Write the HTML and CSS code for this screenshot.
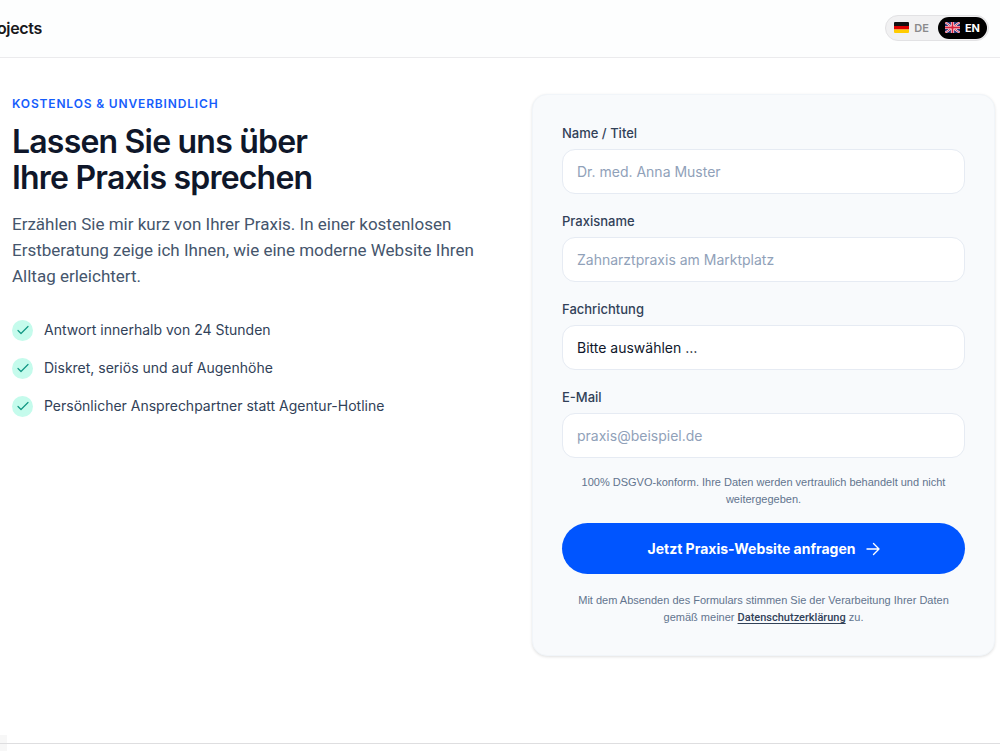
FILE: index.html
```html
<!DOCTYPE html>
<html lang="de">
<head>
<meta charset="utf-8">
<meta name="viewport" content="width=device-width, initial-scale=1">
<title>Praxis-Website anfragen</title>
<link rel="stylesheet" href="styles.css">
</head>
<body>
<header class="header">
  <a class="brand" href="#"><span>Projects</span></a>
  <div class="lang" role="group" aria-label="Sprache">
    <button class="lang-btn" type="button">
      <svg class="flag" viewBox="0 0 15 11" aria-hidden="true"><path fill="#111" d="M0 1a1 1 0 0 1 1-1h13a1 1 0 0 1 1 1v3H0z"/><path fill="#d00" d="M0 4h15v3.500H0z"/><path fill="#fc0" d="M0 7.500h15V10a1 1 0 0 1-1 1H1a1 1 0 0 1-1-1z"/></svg>
      DE
    </button>
    <button class="lang-btn lang-active" type="button" aria-pressed="true">
      <svg class="flag" viewBox="0 0 15 11" aria-hidden="true"><path fill="#29337a" d="M0 0h15v11H0z"/><path stroke="#fff" stroke-width="2" d="M0 0l15 11M15 0L0 11"/><path stroke="#d8203c" stroke-width=".9" d="M0 0l15 11M15 0L0 11"/><path stroke="#fff" stroke-width="3.200" d="M7.500 0v11M0 5.500h15"/><path stroke="#d8203c" stroke-width="1.800" d="M7.500 0v11M0 5.500h15"/></svg>
      EN
    </button>
  </div>
</header>
<main class="contact">
  <section class="intro">
    <p class="eyebrow">Kostenlos &amp; unverbindlich</p>
    <h1 class="title">Lassen Sie uns über<br>Ihre Praxis sprechen</h1>
    <p class="lead">Erzählen Sie mir kurz von Ihrer Praxis. In einer kostenlosen Erstberatung zeige ich Ihnen, wie eine moderne Website Ihren Alltag erleichtert.</p>
    <ul class="benefits">
      <li><span class="tick"><svg viewBox="0 0 12 12" aria-hidden="true"><path d="M1 6.500l3 3 7-7"/></svg></span>Antwort innerhalb von 24 Stunden</li>
      <li><span class="tick"><svg viewBox="0 0 12 12" aria-hidden="true"><path d="M1 6.500l3 3 7-7"/></svg></span>Diskret, seriös und auf Augenhöhe</li>
      <li><span class="tick"><svg viewBox="0 0 12 12" aria-hidden="true"><path d="M1 6.500l3 3 7-7"/></svg></span>Persönlicher Ansprechpartner statt Agentur-Hotline</li>
    </ul>
  </section>
  <form class="card">
    <div class="fields">
      <div class="field"><label for="name">Name / Titel</label><input id="name" type="text" placeholder="Dr. med. Anna Muster"></div>
      <div class="field"><label for="praxis">Praxisname</label><input id="praxis" type="text" placeholder="Zahnarztpraxis am Marktplatz"></div>
      <div class="field"><label for="fach">Fachrichtung</label><select id="fach"><option>Bitte auswählen …</option></select></div>
      <div class="field"><label for="email">E-Mail</label><input id="email" type="email" placeholder="praxis@beispiel.de"></div>
    </div>
    <p class="note privacy">100% DSGVO-konform. Ihre Daten werden vertraulich behandelt und nicht weitergegeben.</p>
    <button class="submit" type="submit">Jetzt Praxis-Website anfragen
      <svg viewBox="0 0 14 14" aria-hidden="true"><path d="M1 7h12M7.500 1.500L13 7l-5.500 5.500"/></svg>
    </button>
    <p class="note terms">Mit dem Absenden des Formulars stimmen Sie der Verarbeitung Ihrer Daten gemäß meiner <a href="#">Datenschutzerklärung</a> zu.</p>
  </form>
</main>
<footer class="footer"></footer>
</body>
</html>
```
FILE: styles.css
```css
* { box-sizing: border-box; }

body {
  margin: 0;
  min-height: 100vh;
  display: flex;
  flex-direction: column;
  background: #fff;
  color: #0f172a;
  font-family: Inter, "Liberation Sans", sans-serif;
}

button, input, select { font: inherit; }
p, h1, ul { margin: 0; padding: 0; }

.header {
  display: flex;
  align-items: center;
  justify-content: space-between;
  height: 58px;
  padding: 0 11px 2px 0;
  background: #fdfefe;
  border-bottom: 1px solid #ebebed;
}

.brand {
  display: flex;
  justify-content: flex-end;
  width: 42px;
  overflow: hidden;
  color: #18181b;
  font-size: 16px;
  font-weight: 600;
  letter-spacing: -0.02em;
  line-height: 24px;
  text-decoration: none;
}

.lang {
  display: flex;
  padding: 1px;
  border: 1px solid #e2e2e4;
  border-radius: 14px;
  background: #f1f1f2;
}

.lang-btn {
  display: flex;
  align-items: center;
  gap: 5px;
  height: 22px;
  padding: 0 7px;
  border: 0;
  border-radius: 11px;
  background: transparent;
  color: #8a8a8c;
  font-size: 11px;
  font-weight: 600;
}

.lang-btn:first-child { padding-right: 9px; }
.lang-active { background: #000; color: #fff; font-weight: 700; }
.flag { width: 15px; height: 11px; }

.contact {
  display: grid;
  grid-template-columns: 463fr 463fr;
  gap: 57px;
  align-items: start;
  padding: 36px 5px 0 12px;
}

.eyebrow {
  color: #155dfc;
  font-size: 12px;
  font-weight: 600;
  letter-spacing: 0.07em;
  line-height: 20px;
  text-transform: uppercase;
}

.title {
  margin-top: 10px;
  font-size: 32px;
  font-weight: 600;
  letter-spacing: -0.025em;
  line-height: 36px;
}

.lead {
  margin-top: 15px;
  color: #45556c;
  font-family: Roboto, "Liberation Sans", sans-serif;
  font-size: 17px;
  line-height: 26px;
}

.benefits {
  display: flex;
  flex-direction: column;
  gap: 16px;
  margin-top: 30px;
  color: #314158;
  font-size: 14px;
  line-height: 22px;
  list-style: none;
}

.benefits li { display: flex; align-items: center; gap: 11px; }

.tick {
  display: flex;
  align-items: center;
  justify-content: center;
  flex: none;
  width: 21px;
  height: 21px;
  border-radius: 50%;
  background: #c5fbec;
}

.tick svg { width: 12px; height: 12px; fill: none; stroke: #109684; stroke-width: 1.2; stroke-linecap: round; stroke-linejoin: round; }

.card {
  display: flex;
  flex-direction: column;
  padding: 29px;
  border: 1px solid #f1f5f9;
  border-radius: 15px;
  background: #f8fafc;
  box-shadow: 0 1px 3px rgba(0, 0, 0, 0.12);
}

.fields { display: grid; gap: 18px; }
.field { display: flex; flex-direction: column; gap: 7px; }

.field label {
  color: #314158;
  font-size: 13px;
  font-weight: 500;
  line-height: 18px;
}

.field input, .field select {
  appearance: none;
  width: 100%;
  height: 45px;
  padding: 0 14px;
  border: 1px solid #e6ebf3;
  border-radius: 13px;
  background: #fff;
  color: #0f172b;
  font-size: 14px;
}

.field input::placeholder { color: #90a1b9; opacity: 1; }

.note {
  color: #62748e;
  font-family: "Liberation Sans", Arial, sans-serif;
  font-size: 11px;
  line-height: 17px;
  text-align: center;
}

.privacy { margin-top: 16px; padding: 0 14px; }

.submit {
  display: flex;
  align-items: center;
  justify-content: center;
  gap: 10px;
  height: 51px;
  margin-top: 15px;
  border: 0;
  border-radius: 26px;
  background: #0055ff;
  color: #fff;
  font-size: 14px;
  font-weight: 700;
}

.submit svg { width: 14px; height: 14px; fill: none; stroke: currentColor; stroke-width: 1.4; stroke-linecap: round; stroke-linejoin: round; }

.terms { margin-top: 18px; }
.terms a { color: #314158; font-family: Roboto, sans-serif; font-weight: 500; text-underline-offset: 2px; }

.footer {
  position: relative;
  height: 8px;
  margin-top: auto;
  border-top: 1px solid #dedee0;
}

.footer::before {
  content: "";
  position: absolute;
  z-index: -1;
  left: 0;
  bottom: 0;
  width: 7px;
  height: 16px;
  background: #f7f7f7;
}
```
